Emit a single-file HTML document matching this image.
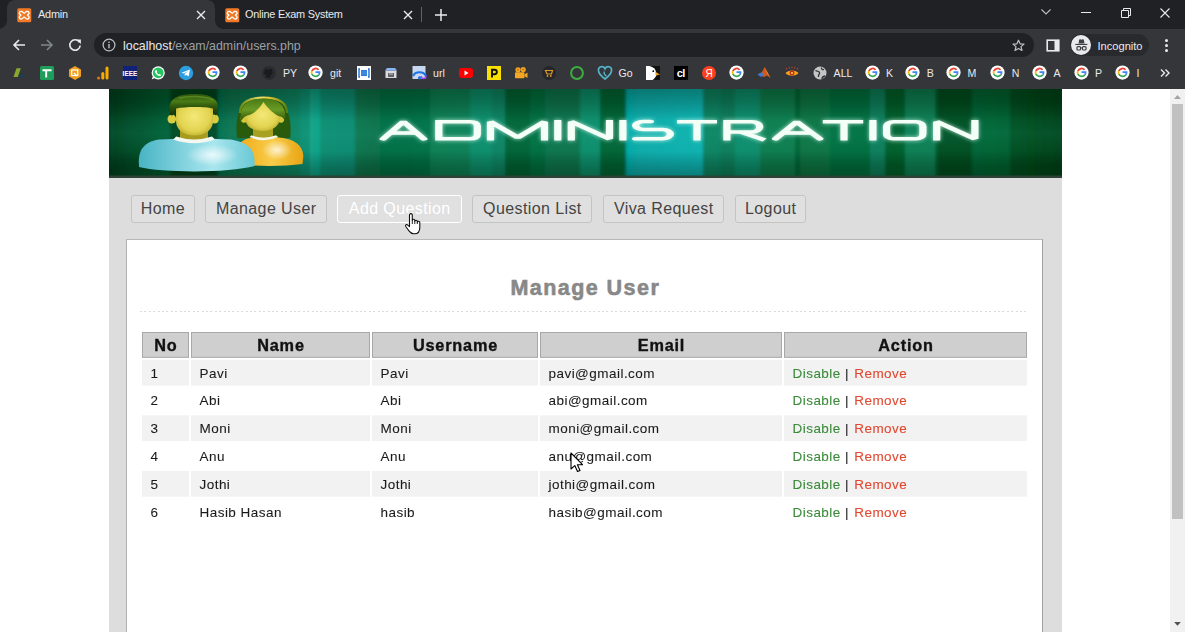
<!DOCTYPE html>
<html><head><meta charset="utf-8">
<style>
*{margin:0;padding:0;box-sizing:border-box}
html,body{width:1185px;height:632px;overflow:hidden;background:#fff;font-family:"Liberation Sans",sans-serif}
.abs{position:absolute}
#tabs{position:absolute;left:0;top:0;width:1185px;height:29px;background:#202124}
#tab1{position:absolute;left:7px;top:0;width:208px;height:29px;background:#35363a;border-radius:8px 8px 0 0}
#tab1:before,#tab1:after{content:"";position:absolute;bottom:0;width:8px;height:8px;background:radial-gradient(circle at 0 0,transparent 7.5px,#35363a 8px)}
#tab1:before{left:-8px}
#tab1:after{right:-8px;background:radial-gradient(circle at 100% 0,transparent 7.5px,#35363a 8px)}
.tabtxt{position:absolute;top:7.3px;letter-spacing:-0.22px;font-size:10.9px;color:#e8eaed;line-height:15px;white-space:nowrap}
#toolbar{position:absolute;left:0;top:29px;width:1185px;height:31px;background:#35363a}
#omni{position:absolute;left:94px;top:33px;width:940px;height:24px;border-radius:12px;background:#202124}
#url{position:absolute;left:123px;top:38px;font-size:12.4px;line-height:16px;color:#9aa0a6;white-space:nowrap}
#url b{font-weight:normal;color:#e8eaed}
#bmbar{position:absolute;left:0;top:60px;width:1185px;height:29px;background:#35363a}
.bm{position:absolute;top:66px;width:14px;height:14px}
.bmt{position:absolute;top:65.8px;font-size:10.6px;line-height:15px;color:#e8eaed;white-space:nowrap}
#page{position:absolute;left:0;top:89px;width:1185px;height:543px;background:#fff;overflow:hidden}
#wrap{position:absolute;left:108.7px;top:0;width:953.8px;height:543px;background:#dddddd}
#banner{position:absolute;left:0;top:0;width:953px;height:89px}
.nb{position:absolute;top:106px;height:28px;border:1px solid #c4c4c4;border-radius:3px;background:#e0e0e0;color:#444;font-size:16px;line-height:26px;text-align:center;white-space:nowrap;letter-spacing:0.4px}
#content{position:absolute;left:17.4px;top:150.3px;width:917px;height:420px;background:#fff;border:1px solid #b8b8b8;border-right-color:#a0a0a0;border-left-color:#b0b0b0}
#h2{position:absolute;left:0;top:36px;width:915px;text-align:center;font-weight:bold;font-size:21.5px;line-height:24px;color:#888;letter-spacing:1.45px;text-indent:1.5px;-webkit-text-stroke:0.6px #888}
#dots{position:absolute;left:13px;top:71px;width:888px;height:1px;background:repeating-linear-gradient(90deg,#dadada 0 2px,transparent 2px 4.4px)}
#tbl{position:absolute;left:15px;top:91.3px;width:889px;table-layout:fixed;border-collapse:separate;border-spacing:2px 2px;margin:-2px;transform:scaleY(0.992);transform-origin:0 2px}
#tbl th{height:26px;background:#cfcfcf;border:1px solid #a8a8a8;font-weight:bold;font-size:16.3px;color:#111;text-align:center;padding:1px 0 0 0;line-height:23px;letter-spacing:0.8px;text-indent:0.8px;-webkit-text-stroke:0.35px #111}
#tbl td{height:25.8px;font-size:13.5px;color:#1a1a1a;-webkit-text-stroke:0.08px currentColor;padding:2px 0 0 8.4px;line-height:24px;letter-spacing:0.47px;white-space:nowrap}
#tbl tr.o td{background:#f2f2f2}
.dis{color:#3a8a3a}.rem{color:#e04830;margin-left:1px}
#scroll{position:absolute;left:1170px;top:0;width:15px;height:543px;background:#f1f1f1}
</style></head>
<body>
<div id="tabs">
  <div id="tab1"></div>
  <svg class="abs" style="left:17px;top:7.5px" width="15" height="15" viewBox="0 0 15 15"><rect x="0.3" y="0.3" width="14" height="14" rx="1.5" fill="#f07a28"/><path d="M4.3 3.3C5.8 3.3 6.2 5.3 7.2 5.3C8.2 5.3 8.6 3.3 10.1 3.3C11.6 3.3 12.1 4.4 12.1 5.3C12.1 6.4 10.5 6.7 10.5 7.2C10.5 7.7 12.1 8 12.1 9.1C12.1 10 11.6 11.1 10.1 11.1C8.6 11.1 8.2 9.1 7.2 9.1C6.2 9.1 5.8 11.1 4.3 11.1C2.8 11.1 2.3 10 2.3 9.1C2.3 8 3.9 7.7 3.9 7.2C3.9 6.7 2.3 6.4 2.3 5.3C2.3 4.4 2.8 3.3 4.3 3.3Z" fill="none" stroke="#fff" stroke-width="1.3"/></svg>
  <div class="tabtxt" style="left:38px">Admin</div>
  <svg class="abs" style="left:196px;top:9.5px" width="10" height="10" viewBox="0 0 10 10"><path d="M1 1L9 9M9 1L1 9" stroke="#e8eaed" stroke-width="1.4"/></svg>
  <svg class="abs" style="left:225px;top:7.5px" width="15" height="15" viewBox="0 0 15 15"><rect x="0.3" y="0.3" width="14" height="14" rx="1.5" fill="#f07a28"/><path d="M4.3 3.3C5.8 3.3 6.2 5.3 7.2 5.3C8.2 5.3 8.6 3.3 10.1 3.3C11.6 3.3 12.1 4.4 12.1 5.3C12.1 6.4 10.5 6.7 10.5 7.2C10.5 7.7 12.1 8 12.1 9.1C12.1 10 11.6 11.1 10.1 11.1C8.6 11.1 8.2 9.1 7.2 9.1C6.2 9.1 5.8 11.1 4.3 11.1C2.8 11.1 2.3 10 2.3 9.1C2.3 8 3.9 7.7 3.9 7.2C3.9 6.7 2.3 6.4 2.3 5.3C2.3 4.4 2.8 3.3 4.3 3.3Z" fill="none" stroke="#fff" stroke-width="1.3"/></svg>
  <div class="tabtxt" style="left:245px">Online Exam System</div>
  <svg class="abs" style="left:403px;top:9.5px" width="10" height="10" viewBox="0 0 10 10"><path d="M1 1L9 9M9 1L1 9" stroke="#e8eaed" stroke-width="1.4"/></svg>
  <div class="abs" style="left:421px;top:7px;width:1px;height:15px;background:#5f6368"></div>
  <svg class="abs" style="left:434px;top:8px" width="14" height="14" viewBox="0 0 14 14"><path d="M7 1V13M1 7H13" stroke="#e8eaed" stroke-width="1.5"/></svg>
  <svg class="abs" style="left:1040px;top:7px" width="12" height="10" viewBox="0 0 12 10"><path d="M1.5 2.5L6 7L10.5 2.5" fill="none" stroke="#bdc1c6" stroke-width="1.1"/></svg>
  <div class="abs" style="left:1081px;top:12px;width:9.5px;height:1px;background:#e8eaed"></div>
  <svg class="abs" style="left:1120px;top:7px" width="12" height="11" viewBox="0 0 12 11"><path d="M1.5 3.5h7v7h-7z M3.5 3.5V1.5h7v7h-2" fill="none" stroke="#e8eaed" stroke-width="1"/></svg>
  <svg class="abs" style="left:1160px;top:7.5px" width="10" height="10" viewBox="0 0 10 10"><path d="M0.5 0.5L9.5 9.5M9.5 0.5L0.5 9.5" stroke="#e8eaed" stroke-width="1.1"/></svg>
</div>
<div id="toolbar"></div>
<div id="omni"></div>
<svg class="abs" style="left:12px;top:38px" width="14" height="14" viewBox="0 0 14 14"><path d="M13 7H2M7 2L2 7L7 12" fill="none" stroke="#e8eaed" stroke-width="1.6"/></svg>
<svg class="abs" style="left:40px;top:38px" width="14" height="14" viewBox="0 0 14 14"><path d="M1 7H12M7 2L12 7L7 12" fill="none" stroke="#80868b" stroke-width="1.6"/></svg>
<svg class="abs" style="left:67.5px;top:38px" width="14" height="14" viewBox="0 0 14 14"><path d="M11.4 4.2A5.2 5.2 0 1 0 12.2 7.5" fill="none" stroke="#e8eaed" stroke-width="1.6"/><path d="M8.2 1.4H12.9V6.1Z" fill="#e8eaed"/></svg>
<svg class="abs" style="left:102px;top:38px" width="14" height="14" viewBox="0 0 14 14"><circle cx="7" cy="7" r="5.9" fill="none" stroke="#bdc1c6" stroke-width="1.2"/><rect x="6.3" y="6" width="1.4" height="4.3" fill="#bdc1c6"/><rect x="6.3" y="3.6" width="1.4" height="1.4" fill="#bdc1c6"/></svg>
<div id="url"><b>localhost</b>/exam/admin/users.php</div>
<svg class="abs" style="left:1012px;top:39px" width="13" height="13" viewBox="0 0 13 13"><path d="M6.5 1.2L8.1 4.8L12 5.1L9 7.6L10 11.5L6.5 9.4L3 11.5L4 7.6L1 5.1L4.9 4.8Z" fill="none" stroke="#bdc1c6" stroke-width="1.2" stroke-linejoin="round"/></svg>
<svg class="abs" style="left:1046px;top:39px" width="14" height="13" viewBox="0 0 14 13"><rect x="1.2" y="1.2" width="11.6" height="10.6" fill="none" stroke="#e8eaed" stroke-width="1.6"/><rect x="8.5" y="1.2" width="4.3" height="10.6" fill="#e8eaed"/></svg>
<div class="abs" style="left:1070px;top:34px;width:79px;height:22px;border-radius:11px;background:#292a2d"></div>
<div class="abs" style="left:1070.5px;top:35px;width:20px;height:20px;border-radius:10px;background:#e8eaed"></div>
<svg class="abs" style="left:1072.5px;top:37px" width="16" height="16" viewBox="0 0 16 16"><path d="M5.5 6.6L6.2 2.8C6.3 2.3 6.8 2.1 7.3 2.3L8.5 2.7L9.7 2.3C10.2 2.1 10.7 2.3 10.8 2.8L11.5 6.6Z" fill="#3c4043"/><rect x="2.3" y="6.9" width="12" height="1.1" fill="#3c4043"/><rect x="3.95" y="9.6" width="3.6" height="3.4" rx="1" fill="none" stroke="#3c4043" stroke-width="1.2"/><rect x="9.45" y="9.6" width="3.6" height="3.4" rx="1" fill="none" stroke="#3c4043" stroke-width="1.2"/><path d="M7.5 10.9H9.5" stroke="#3c4043" stroke-width="0.9"/></svg>
<div class="abs" style="left:1097.5px;top:38px;font-size:11.1px;line-height:16px;color:#e8eaed">Incognito</div>
<div class="abs" style="left:1164.8px;top:38.8px;width:3px;height:3px;border-radius:2px;background:#e8eaed"></div>
<div class="abs" style="left:1164.8px;top:43.8px;width:3px;height:3px;border-radius:2px;background:#e8eaed"></div>
<div class="abs" style="left:1164.8px;top:48.8px;width:3px;height:3px;border-radius:2px;background:#e8eaed"></div>
<div id="bmbar"></div>
<svg width="0" height="0" style="position:absolute"><defs>
<symbol id="g" viewBox="0 0 16 16"><circle cx="8" cy="8" r="7.6" fill="#fff"/><path d="M11.3 5.1A4.3 4.3 0 0 0 4.1 6.4" fill="none" stroke="#ea4335" stroke-width="1.9"/><path d="M4.1 6.4A4.3 4.3 0 0 0 4.1 9.6" fill="none" stroke="#fbbc05" stroke-width="1.9"/><path d="M4.1 9.6A4.3 4.3 0 0 0 11.6 10.3" fill="none" stroke="#34a853" stroke-width="1.9"/><path d="M11.6 10.3A4.3 4.3 0 0 0 12.3 7.7H8" fill="none" stroke="#4285f4" stroke-width="1.9"/></symbol>
</defs></svg>
<svg class="abs" style="left:11px;top:65px" width="16" height="16" viewBox="0 0 16 16"><path d="M2.5 12L5.5 3.2H9.8L6.8 12Z" fill="#8aa82e"/><rect x="9.3" y="9.6" width="3" height="2.6" fill="#0e4658"/></svg>
<svg class="abs" style="left:39px;top:65px" width="16" height="16" viewBox="0 0 16 16"><rect x="1" y="1" width="14" height="14" rx="1.5" fill="#1e9e5a"/><path d="M3.5 5.2H12.5M7.2 5.2V12.5" stroke="#fff" stroke-width="1.9"/></svg>
<svg class="abs" style="left:67px;top:65px" width="16" height="16" viewBox="0 0 16 16"><path d="M8 1L14 4.5V11.5L8 15L2 11.5V4.5Z" fill="#f0a01e"/><rect x="4.7" y="5" width="6" height="5.5" fill="none" stroke="#fff" stroke-width="1.2"/><path d="M7 8l3 3" stroke="#fff" stroke-width="1.2"/></svg>
<svg class="abs" style="left:95px;top:65px" width="16" height="16" viewBox="0 0 16 16"><rect x="10.5" y="1.5" width="3" height="13" rx="1.5" fill="#f9ab00"/><rect x="6.3" y="7" width="3" height="7.5" rx="1.5" fill="#f9ab00"/><circle cx="3.6" cy="13" r="1.6" fill="#e37400"/></svg>
<svg class="abs" style="left:122px;top:65px" width="16" height="16" viewBox="0 0 16 16"><rect x="1" y="1" width="14" height="14" fill="#10217a"/><text x="8" y="10.8" font-size="6.5" font-weight="bold" text-anchor="middle" fill="#fff" font-family="Liberation Sans">IEEE</text></svg>
<svg class="abs" style="left:150px;top:65px" width="16" height="16" viewBox="0 0 16 16"><circle cx="8.2" cy="7.8" r="6.6" fill="#fff"/><circle cx="8.2" cy="7.8" r="5.4" fill="#25c561"/><path d="M1.8 14.5L3 10.8L5.2 12.8Z" fill="#fff"/><path d="M5.6 5.3c.4-.5.9-.3 1.1.2l.4 1c.1.3-.3.6-.4.8.4.9 1.2 1.7 2.1 2.1.2-.1.5-.5.8-.4l1 .4c.5.2.7.7.2 1.1-.9.9-2.2.6-3.4-.3-1-.7-1.8-1.6-2.2-2.6-.3-.8-.3-1.7.4-2.3z" fill="#fff"/></svg>
<svg class="abs" style="left:178px;top:65px" width="16" height="16" viewBox="0 0 16 16"><circle cx="8" cy="8" r="7.2" fill="#2b9fe0"/><path d="M3.5 7.8L12 4.6L10.6 11.6L8 9.8L6.8 11L6.6 9L10.2 6L5.8 8.6Z" fill="#fff"/></svg>
<svg class="abs" style="left:205.0px;top:65px" width="15" height="15"><use href="#g"/></svg>
<svg class="abs" style="left:233.0px;top:65px" width="15" height="15"><use href="#g"/></svg>
<svg class="abs" style="left:261px;top:65px" width="16" height="16" viewBox="0 0 16 16"><circle cx="8" cy="8" r="7" fill="#2a2b2e"/><path d="M5 12.5c0-1.5.5-2 1-2.3-2-.3-2.8-1.3-2.8-3 0-.7.3-1.3.7-1.8-.1-.4-.1-1 .1-1.6.8 0 1.4.4 1.8.7a6 6 0 0 1 3.2 0c.4-.3 1-.7 1.8-.7.2.6.2 1.2.1 1.6.4.5.7 1.1.7 1.8 0 1.7-.8 2.7-2.8 3 .5.3 1 .8 1 2.3" fill="#1a1b1e"/></svg>
<div class="bmt" style="left:283px">PY</div>
<svg class="abs" style="left:308.0px;top:65px" width="15" height="15"><use href="#g"/></svg>
<div class="bmt" style="left:330px">git</div>
<svg class="abs" style="left:355.5px;top:65px" width="16" height="16" viewBox="0 0 16 16"><rect x="1" y="1" width="14" height="14" fill="#fff"/><path d="M4 4H3V12H4M12 4H13V12H12" fill="none" stroke="#1a6fd6" stroke-width="1.4"/><rect x="5" y="5" width="6" height="6" fill="#1a6fd6"/><path d="M6 5.5V10.5M8 5.5V10.5M10 5.5V10.5" stroke="#9cc3f5" stroke-width="0.6"/></svg>
<svg class="abs" style="left:383px;top:65px" width="16" height="16" viewBox="0 0 16 16"><path d="M2.5 5.5H13.5V13H2.5Z" fill="#dadce0"/><path d="M2 5.5L4 3H12L14 5.5Z" fill="#8ab4f8"/><rect x="5" y="8" width="6" height="4" fill="#5f6368"/><path d="M6 9h4" stroke="#dadce0" stroke-width="0.8"/></svg>
<svg class="abs" style="left:411px;top:65px" width="16" height="16" viewBox="0 0 16 16"><rect x="1.5" y="1" width="13" height="13" fill="#c7d8f0"/><path d="M2 11A7 6 0 0 1 15 11" fill="none" stroke="#1a73e8" stroke-width="2.2"/><path d="M10 11A2.5 2.5 0 0 0 15 11" fill="none" stroke="#a142f4" stroke-width="1.5"/><circle cx="8.5" cy="12.8" r="1.6" fill="#1a73e8"/></svg>
<div class="bmt" style="left:433px">url</div>
<svg class="abs" style="left:458px;top:65px" width="16" height="16" viewBox="0 0 16 16"><rect x="1" y="3" width="14" height="10" rx="3" fill="#f00"/><path d="M6.5 5.6V10.4L10.5 8Z" fill="#fff"/></svg>
<svg class="abs" style="left:486px;top:65px" width="16" height="16" viewBox="0 0 16 16"><rect x="1" y="1" width="14" height="14" fill="#fbe100"/><path d="M6 12.5V4.8H8.6A2.2 2.2 0 0 1 8.6 9.2H6" fill="none" stroke="#111" stroke-width="1.9"/></svg>
<svg class="abs" style="left:513px;top:65px" width="16" height="16" viewBox="0 0 16 16"><circle cx="5" cy="4.8" r="2.6" fill="#f5a623"/><circle cx="10.2" cy="4.6" r="2.6" fill="#f5a623"/><rect x="2" y="7.3" width="9.5" height="6" rx="0.8" fill="#f5a623"/><path d="M11.5 9.5L14.5 7.6V13L11.5 11.2Z" fill="#f5a623"/><circle cx="5" cy="4.8" r="1" fill="#c47500"/><circle cx="10.2" cy="4.6" r="1" fill="#c47500"/></svg>
<svg class="abs" style="left:541px;top:65px" width="16" height="16" viewBox="0 0 16 16"><circle cx="8" cy="8" r="7" fill="#26272a"/><path d="M4.5 5.5H11.5L10.5 9H6Z" fill="none" stroke="#e09a2a" stroke-width="1.2"/><circle cx="6.5" cy="11" r="0.9" fill="#e09a2a"/><circle cx="9.8" cy="11" r="0.9" fill="#e09a2a"/></svg>
<svg class="abs" style="left:569px;top:65px" width="16" height="16" viewBox="0 0 16 16"><circle cx="8" cy="8" r="5.9" fill="none" stroke="#3cae3f" stroke-width="2"/></svg>
<svg class="abs" style="left:596.5px;top:65px" width="16" height="16" viewBox="0 0 16 16"><path d="M8 14C4 11 1.5 8.5 1.5 5.5A3.4 3.4 0 0 1 8 3.7A3.4 3.4 0 0 1 14.5 5.5C14.5 8.5 12 11 8 14Z" fill="none" stroke="#54b4c8" stroke-width="1.7"/><path d="M7 6.5C7 9 8 10.5 9.5 11" fill="none" stroke="#54b4c8" stroke-width="1.3"/></svg>
<div class="bmt" style="left:618.5px">Go</div>
<svg class="abs" style="left:645px;top:65px" width="16" height="16" viewBox="0 0 16 16"><rect x="1" y="1" width="14" height="14" fill="#111"/><path d="M1 1H4.5C8.5 2 10.5 4 11 7L11.5 10C10.5 12.5 9 14 7.5 15H1Z" fill="#fff"/><path d="M10.2 6.8L15 9.6L10.8 10.6Z" fill="#f0a31b"/><circle cx="8.3" cy="6.2" r="0.9" fill="#111"/></svg>
<svg class="abs" style="left:673px;top:65px" width="16" height="16" viewBox="0 0 16 16"><rect x="1" y="1" width="14" height="14" fill="#000"/><text x="7.8" y="12.3" font-size="11" font-weight="bold" text-anchor="middle" fill="#fff" font-family="Liberation Sans" letter-spacing="-0.6">cl</text></svg>
<svg class="abs" style="left:701px;top:65px" width="16" height="16" viewBox="0 0 16 16"><circle cx="8" cy="8" r="7" fill="#fc3f1d"/><text x="8" y="11.8" font-size="10" text-anchor="middle" fill="#fff" font-family="Liberation Sans">Я</text></svg>
<svg class="abs" style="left:729.0px;top:65px" width="15" height="15"><use href="#g"/></svg>
<svg class="abs" style="left:756px;top:65px" width="16" height="16" viewBox="0 0 16 16"><path d="M1.5 9.5L6 7.2L8.5 2L14.5 13L11 10.5L8 12Z" fill="#d2581c"/><path d="M1.5 9.5L6 7.2L7.5 10L5 12Z" fill="#3a7bd5"/><path d="M8.5 2L11 8L14.5 13Z" fill="#f2a33a"/></svg>
<svg class="abs" style="left:784px;top:65px" width="16" height="16" viewBox="0 0 16 16"><path d="M1.5 8C4 4.5 12 4.5 14.5 8C12 11.5 4 11.5 1.5 8Z" fill="#f6a21a"/><circle cx="8" cy="8" r="2.4" fill="#c0281a"/><circle cx="8" cy="8" r="1" fill="#f6e14a"/><path d="M3 4.5L2 3M5.5 3.5L5 2M8 3.2V1.8M10.5 3.5L11 2M13 4.5L14 3" stroke="#e2431f" stroke-width="0.9"/></svg>
<svg class="abs" style="left:812px;top:65px" width="16" height="16" viewBox="0 0 16 16"><circle cx="8" cy="8" r="6.5" fill="#c4c7c5"/><path d="M3.5 5.5C5 6.5 7 5.5 7.5 7.5C8 9.5 6 9 6.5 12M9.5 2.5C9 4 10.5 5 12 4.5M10 14C10 12 11 11.5 13 11" fill="none" stroke="#35363a" stroke-width="1.3"/></svg>
<div class="bmt" style="left:833.6px">ALL</div>
<svg class="abs" style="left:864.5px;top:65px" width="15" height="15"><use href="#g"/></svg>
<div class="bmt" style="left:886px">K</div>
<svg class="abs" style="left:905.0px;top:65px" width="15" height="15"><use href="#g"/></svg>
<div class="bmt" style="left:926.7px">B</div>
<svg class="abs" style="left:945.5px;top:65px" width="15" height="15"><use href="#g"/></svg>
<div class="bmt" style="left:967.5px">M</div>
<svg class="abs" style="left:990.0px;top:65px" width="15" height="15"><use href="#g"/></svg>
<div class="bmt" style="left:1011.7px">N</div>
<svg class="abs" style="left:1032.0px;top:65px" width="15" height="15"><use href="#g"/></svg>
<div class="bmt" style="left:1053.6px">A</div>
<svg class="abs" style="left:1073.7px;top:65px" width="15" height="15"><use href="#g"/></svg>
<div class="bmt" style="left:1095px">P</div>
<svg class="abs" style="left:1115.0px;top:65px" width="15" height="15"><use href="#g"/></svg>
<div class="bmt" style="left:1136.5px">I</div>
<svg class="abs" style="left:1159px;top:67px" width="12" height="12" viewBox="0 0 12 12"><path d="M2 2.5L5.5 6L2 9.5M6.5 2.5L10 6L6.5 9.5" fill="none" stroke="#e8eaed" stroke-width="1.4"/></svg>
<div id="page">
  <div id="wrap">
    <svg id="banner" width="953" height="89" viewBox="0 0 953 89">
<defs>
<linearGradient id="bg" x1="0" y1="0" x2="953" y2="0" gradientUnits="userSpaceOnUse"><stop offset="0.00000" stop-color="#033a1a"/><stop offset="0.06359" stop-color="#065a30"/><stop offset="0.06443" stop-color="#033c18"/><stop offset="0.11396" stop-color="#043e1a"/><stop offset="0.11480" stop-color="#066a48"/><stop offset="0.20000" stop-color="#0a8262"/><stop offset="0.20084" stop-color="#098a70"/><stop offset="0.21049" stop-color="#0a8c70"/><stop offset="0.21133" stop-color="#12a088"/><stop offset="0.22099" stop-color="#10a086"/><stop offset="0.22183" stop-color="#0a8a70"/><stop offset="0.25771" stop-color="#098670"/><stop offset="0.25855" stop-color="#07704a"/><stop offset="0.28395" stop-color="#076c44"/><stop offset="0.28478" stop-color="#066a40"/><stop offset="0.33641" stop-color="#066c42"/><stop offset="0.33725" stop-color="#077a50"/><stop offset="0.37838" stop-color="#077c52"/><stop offset="0.37922" stop-color="#088a68"/><stop offset="0.40147" stop-color="#088a68"/><stop offset="0.40231" stop-color="#078060"/><stop offset="0.41511" stop-color="#078060"/><stop offset="0.41595" stop-color="#055e30"/><stop offset="0.44134" stop-color="#055e30"/><stop offset="0.44218" stop-color="#066a3a"/><stop offset="0.45708" stop-color="#066a3a"/><stop offset="0.45792" stop-color="#077048"/><stop offset="0.49381" stop-color="#077048"/><stop offset="0.49465" stop-color="#088a68"/><stop offset="0.51480" stop-color="#088a68"/><stop offset="0.51563" stop-color="#056030"/><stop offset="0.54208" stop-color="#056030"/><stop offset="0.54292" stop-color="#06a8a8"/><stop offset="0.62288" stop-color="#0ab0b0"/><stop offset="0.62371" stop-color="#088060"/><stop offset="0.64071" stop-color="#088060"/><stop offset="0.64155" stop-color="#077a58"/><stop offset="0.65645" stop-color="#077a58"/><stop offset="0.65729" stop-color="#088a6a"/><stop offset="0.68269" stop-color="#088a6a"/><stop offset="0.68353" stop-color="#077848"/><stop offset="0.71941" stop-color="#077848"/><stop offset="0.72025" stop-color="#056030"/><stop offset="0.72466" stop-color="#056030"/><stop offset="0.72550" stop-color="#077040"/><stop offset="0.75614" stop-color="#077040"/><stop offset="0.75698" stop-color="#066a3a"/><stop offset="0.79811" stop-color="#066a3a"/><stop offset="0.79895" stop-color="#077a58"/><stop offset="0.81385" stop-color="#077a58"/><stop offset="0.81469" stop-color="#055a28"/><stop offset="0.83484" stop-color="#055a28"/><stop offset="0.83568" stop-color="#077a50"/><stop offset="0.86632" stop-color="#077a50"/><stop offset="0.86716" stop-color="#056030"/><stop offset="0.86842" stop-color="#056030"/><stop offset="0.86925" stop-color="#044a1c"/><stop offset="0.90514" stop-color="#044a1c"/><stop offset="0.90598" stop-color="#056030"/><stop offset="0.94502" stop-color="#055c2e"/><stop offset="0.94586" stop-color="#044a1c"/><stop offset="1.00000" stop-color="#033c14"/></linearGradient>
<linearGradient id="vsh" x1="0" y1="0" x2="0" y2="1"><stop offset="0" stop-color="#001a08" stop-opacity="0.35"/><stop offset="0.35" stop-color="#000" stop-opacity="0"/><stop offset="0.7" stop-color="#000" stop-opacity="0"/><stop offset="0.97" stop-color="#001a08" stop-opacity="0.32"/></linearGradient>
<linearGradient id="vhl" x1="0" y1="0" x2="0" y2="1"><stop offset="0.15" stop-color="#30d0b0" stop-opacity="0"/><stop offset="0.5" stop-color="#30d0b0" stop-opacity="0.13"/><stop offset="0.85" stop-color="#30d0b0" stop-opacity="0"/></linearGradient>
<filter id="hblur" x="0" y="0" width="100%" height="100%"><feGaussianBlur stdDeviation="1.5 0"/></filter>
<filter id="glow" x="-10%" y="-50%" width="120%" height="200%"><feGaussianBlur in="SourceGraphic" stdDeviation="2.2" result="b"/><feColorMatrix in="b" type="matrix" values="0 0 0 0 0.7  0 0 0 0 1  0 0 0 0 0.9  0 0 0 0.8 0" result="c"/><feMerge><feMergeNode in="c"/><feMergeNode in="SourceGraphic"/></feMerge></filter>
<linearGradient id="cyan" x1="0" y1="0" x2="1" y2="0"><stop offset="0" stop-color="#48b4c4"/><stop offset="0.35" stop-color="#7ed0dc"/><stop offset="0.65" stop-color="#a8e6ee"/><stop offset="1" stop-color="#68c8d4"/></linearGradient>
<radialGradient id="cyanhl" cx="0.62" cy="0.45" r="0.5"><stop offset="0" stop-color="#e8ffff" stop-opacity="0.9"/><stop offset="1" stop-color="#e8ffff" stop-opacity="0"/></radialGradient>
<linearGradient id="orng" x1="0" y1="0" x2="1" y2="0"><stop offset="0" stop-color="#f0a818"/><stop offset="0.55" stop-color="#f8cc48"/><stop offset="1" stop-color="#e8a414"/></linearGradient>
<radialGradient id="face" cx="0.5" cy="0.45" r="0.65"><stop offset="0" stop-color="#f4e878"/><stop offset="0.65" stop-color="#e2d450"/><stop offset="1" stop-color="#b0a424"/></radialGradient>
<linearGradient id="hair" x1="0" y1="0" x2="0" y2="1"><stop offset="0" stop-color="#4a7a14"/><stop offset="0.5" stop-color="#6a9a24"/><stop offset="1" stop-color="#2a5008"/></linearGradient>
<linearGradient id="gold" x1="0" y1="0" x2="1" y2="0"><stop offset="0" stop-color="#6a8a10"/><stop offset="0.45" stop-color="#f4e070"/><stop offset="0.6" stop-color="#e8c838"/><stop offset="1" stop-color="#5a8010"/></linearGradient>
<radialGradient id="whl" cx="0.5" cy="0.5" r="0.5"><stop offset="0" stop-color="#ffffff" stop-opacity="0.75"/><stop offset="1" stop-color="#ffffff" stop-opacity="0"/></radialGradient>
<linearGradient id="hair2" x1="0" y1="0" x2="0" y2="1"><stop offset="0" stop-color="#2c560c"/><stop offset="0.35" stop-color="#4a7a16"/><stop offset="0.6" stop-color="#2e560c"/><stop offset="1" stop-color="#1a3406"/></linearGradient>
</defs>
<rect x="-6" width="965" height="89" fill="url(#bg)" filter="url(#hblur)"/>
<rect width="953" height="89" fill="url(#vhl)"/>
<rect width="953" height="89" fill="url(#vsh)"/>
<rect y="86.5" width="953" height="2.5" fill="#2e4236"/>
<!-- woman -->
<path d="M128 49 C126 30 128 8.3 154.4 8.3 C180 8.3 183 30 181.2 49 Z" fill="#2a5a0c"/>
<path d="M131 24 C131 13 140 8.6 154.4 8.6 C169 8.6 178 13 178 24" fill="none" stroke="url(#gold)" stroke-width="2.2"/>
<path d="M126 73 C125.5 58 130 50 145 48.2 H168 C185 49.5 194 56 194.3 67 L193.5 75 C175 77.5 150 77.5 128 75.5 Z" fill="url(#orng)"/>
<ellipse cx="168" cy="61" rx="15" ry="10" fill="url(#whl)"/>
<rect x="144" y="38" width="20" height="10" fill="#a8a020"/>
<path d="M140.5 48 Q154.5 54.5 169.2 48 L167 46.3 Q154.5 51 142.5 46.3 Z" fill="#f4f6ec"/>
<ellipse cx="135" cy="29.5" rx="3.3" ry="4.2" fill="#d4c838"/><ellipse cx="172" cy="29.5" rx="3.3" ry="4.2" fill="#d4c838"/>
<path d="M136.5 22 C136.5 15 144 12.7 153.3 12.7 C162.5 12.7 170.5 15 170.5 22 V30 C170.5 37.5 163 42 153.5 42 C144 42 136.5 37.5 136.5 30 Z" fill="url(#face)"/>
<path d="M132 32 C130 16 139 9.5 154 9.5 C169 9.5 178 16 176 32 C174.5 29 173 27.5 171 27.5 C166 26 158 19 154.5 13 C151 19 144 26 138.5 26.5 C136 27 134 29 132 32 Z" fill="url(#hair)"/>
<!-- man -->
<path d="M30 76 C29 62 34 53 50 50.5 C70 49 100 49 122 50.5 C138 53 145.6 60 145.6 72 V77 C120 84 55 84 30 78 Z" fill="url(#cyan)"/>
<ellipse cx="103" cy="66" rx="26" ry="11" fill="url(#whl)"/>
<rect x="71" y="40" width="28" height="11" fill="#a89c20"/>
<path d="M64.3 50.5 Q85 58 105.9 50.5 L103 47.5 Q85 53.5 67.2 47.5 Z" fill="#f4f8f0"/>
<ellipse cx="62.8" cy="30" rx="4.3" ry="4.6" fill="#d8cc40"/><ellipse cx="105.6" cy="30" rx="4.3" ry="4.6" fill="#d8cc40"/>
<path d="M67 20 C67 14 75 12 85.5 12 C96 12 104 14 104 20 V32 C104 41 96 46.5 85.5 46.5 C75 46.5 67 41 67 32 Z" fill="url(#face)"/>
<path d="M60.8 26 C58.5 14 62 4.9 85 4.9 C106 4.9 111 12 108.6 24 L106.2 26.5 C105.2 22 104.5 20.5 104 19.5 C96 17.5 76 17.5 67 19.5 C65.8 21.5 64.8 24 63.6 26.5 Z" fill="url(#hair2)"/>
<path d="M70 9 C80 6.5 96 7 104 11" fill="none" stroke="#78a430" stroke-width="1.5" opacity="0.55"/>
<!-- text -->
<g filter="url(#glow)"><g transform="translate(271,0) scale(2,1)" fill="none" stroke="#f4fff8" stroke-width="3.6" stroke-linejoin="miter" stroke-miterlimit="1.5" stroke-linecap="butt">
<path d="M1.6 49.8 L11.7 32.7 L21.9 49.8" stroke-linecap="round"/><path d="M5.5 44 H18"/>
<path d="M29.4 32.7 H45 Q48.65 32.7 48.65 37 V45.5 Q48.65 49.8 45 49.8 H29.4 Z"/>
<path d="M55.25 51.5 V32.7 L68.9 48.5 L82.25 32.7 V51.5"/>
<path d="M88.9 31 V51.5"/>
<path d="M95.65 51.5 V32.7 L114.75 49.8 V31"/>
<path d="M121.45 31 V51.5"/>
<path d="M135.2 32.5 H131.65 A3.85 4 0 0 0 131.65 40.5 H141.25 A3.95 4.6 0 0 1 141.25 49.7 H127.8" stroke-linecap="round"/>
<path d="M148.5 32.7 H168.5 M158.5 31 V51.5"/>
<path d="M173.45 51.5 V32.7 H186 A3.9 5.15 0 0 1 186 43 H173.45 M180.5 43 L192.3 51" />
<path d="M197.8 49.8 L208.35 32.7 L219.9 49.8" stroke-linecap="round"/><path d="M201.5 44 H215"/>
<path d="M221.4 32.7 H241.6 M232 31 V51.5"/>
<path d="M246.45 31 V51.5"/>
<rect x="253.3" y="32.7" width="18.15" height="17.1" rx="3.5" ry="4.5"/>
<path d="M278.35 51.5 V32.7 L297.45 49.8 V31"/>
</g></g>
</svg>
    <div class="nb" style="left:22.5px;width:63.5px">Home</div>
    <div class="nb" style="left:96.8px;width:121.5px">Manage User</div>
    <div class="nb" style="left:228.8px;width:124.5px;border-color:#fff;color:#fff">Add Question</div>
    <div class="nb" style="left:363.7px;width:120px">Question List</div>
    <div class="nb" style="left:494.7px;width:120.8px">Viva Request</div>
    <div class="nb" style="left:626.5px;width:71px">Logout</div>
    <div id="content">
  <div id="h2">Manage User</div>
  <div id="dots"></div>
  <table id="tbl">
    <tr><th style="width:47px">No</th><th style="width:179px">Name</th><th style="width:166px">Username</th><th style="width:242px">Email</th><th style="width:243px">Action</th></tr>
    <tr class="o"><td>1</td><td>Pavi</td><td>Pavi</td><td>pavi@gmail.com</td><td><span class="dis">Disable</span> | <span class="rem">Remove</span></td></tr>
    <tr><td>2</td><td>Abi</td><td>Abi</td><td>abi@gmail.com</td><td><span class="dis">Disable</span> | <span class="rem">Remove</span></td></tr>
    <tr class="o"><td>3</td><td>Moni</td><td>Moni</td><td>moni@gmail.com</td><td><span class="dis">Disable</span> | <span class="rem">Remove</span></td></tr>
    <tr><td>4</td><td>Anu</td><td>Anu</td><td>anu@gmail.com</td><td><span class="dis">Disable</span> | <span class="rem">Remove</span></td></tr>
    <tr class="o"><td>5</td><td>Jothi</td><td>Jothi</td><td>jothi@gmail.com</td><td><span class="dis">Disable</span> | <span class="rem">Remove</span></td></tr>
    <tr><td>6</td><td>Hasib Hasan</td><td>hasib</td><td>hasib@gmail.com</td><td><span class="dis">Disable</span> | <span class="rem">Remove</span></td></tr>
  </table>
</div>
  </div>
  <div id="scroll"></div>
  <svg class="abs" style="left:1170px;top:0" width="15" height="543" viewBox="0 0 15 543"><path d="M4 10H11L7.5 6Z" fill="#a3a3a3"/><rect x="2" y="15" width="11" height="415" fill="#c1c1c1"/><path d="M4.2 533H10.8L7.5 536.8Z" fill="#505050"/></svg>
</div>
<svg class="abs" style="left:403px;top:211px" width="22" height="26" viewBox="0 0 22 26"><path d="M6.5 14.5V4A1.4 1.4 0 0 1 9.3 4V9.5A1.25 1.25 0 0 1 11.8 9.5V10.5A1.25 1.25 0 0 1 14.3 10.5V11.5A1.25 1.25 0 0 1 16.8 11.5V16.5C16.8 20.5 14.8 22.8 11.5 22.8H10.5C8 22.8 6.8 21 5.5 19.3L2.8 15.5C2 14.3 3.2 13 4.4 13.8L6.5 15.6Z" fill="#fff" stroke="#111" stroke-width="1.1" stroke-linejoin="round"/><path d="M9.3 9.5V13M11.8 10.5V13M14.3 11.5V13" stroke="#111" stroke-width="0.9"/></svg>
<svg class="abs" style="left:570px;top:452px" width="14" height="22" viewBox="0 0 14 22"><path d="M1 1V17L4.8 13.6L7.5 19.5L10 18.4L7.4 12.7H12.5Z" fill="#fff" stroke="#000" stroke-width="1.1" stroke-linejoin="round"/></svg>
</body></html>
